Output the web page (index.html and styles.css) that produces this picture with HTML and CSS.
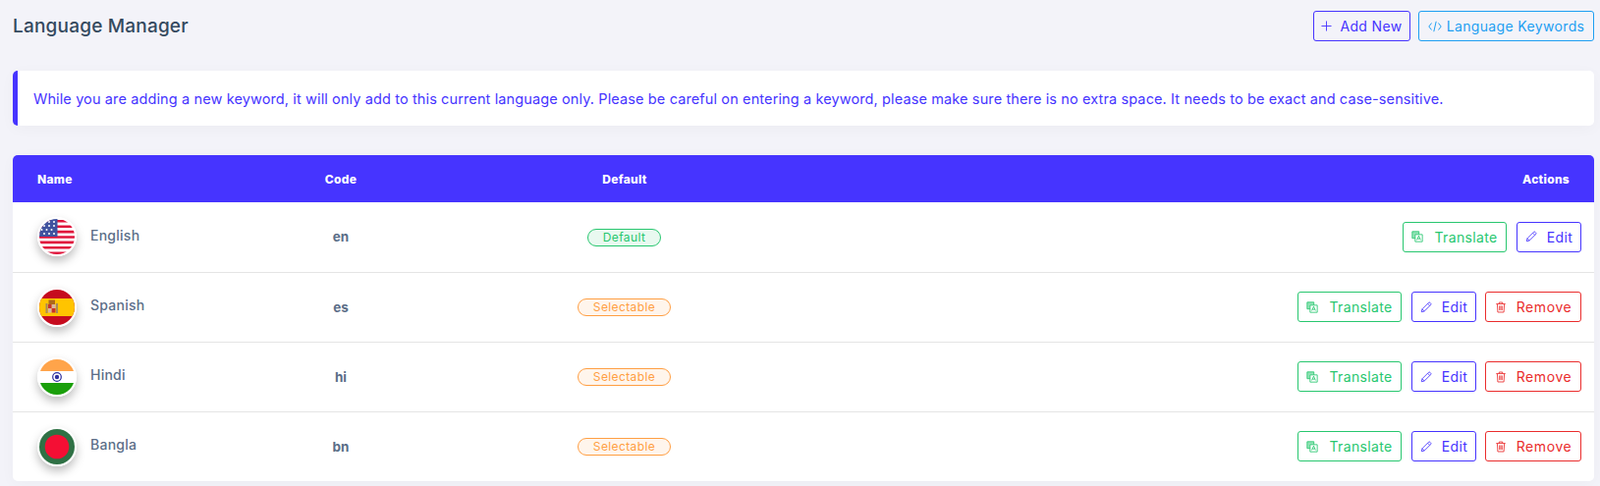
FILE: index.html
```html
<!DOCTYPE html>
<html lang="en">
<head>
    <meta charset="UTF-8">
    <title>Language Manager</title>
    <link rel="stylesheet" href="styles.css">
</head>
<body>

    <div class="top-bar">
        <h2 class="page-title">Language Manager</h2>
        <div class="top-actions">
            <a class="btn btn-purple btn-add" href="#">
                <svg class="icon-plus" viewBox="0 0 12 12"><path d="M6 .5v11M.5 6h11"/></svg>
                Add New
            </a>
            <a class="btn btn-blue btn-keywords" href="#">
                <svg class="icon-code" viewBox="0 0 14 12"><path d="M3.500 2.500 .8 6l2.700 3.500M10.500 2.500 13.200 6l-2.700 3.500M8.200 .8 5.800 11.200"/></svg>
                Language Keywords
            </a>
        </div>
    </div>

    <div class="notice">
        While you are adding a new keyword, it will only add to this current language only. Please be careful on entering a keyword, please make sure there is no extra space. It needs to be exact and case-sensitive.
    </div>

    <div class="table-card">
        <table class="lang-table">
            <colgroup>
                <col class="col-name">
                <col class="col-code">
                <col class="col-default">
                <col>
            </colgroup>
            <thead>
                <tr>
                    <th class="left">Name</th>
                    <th>Code</th>
                    <th>Default</th>
                    <th class="right">Actions</th>
                </tr>
            </thead>
            <tbody>
                <tr>
                    <td>
                        <div class="lang">
                            <span class="flag">
                                <svg viewBox="0 0 36 36">
                                    <rect width="36" height="36" fill="#fff"/>
                                    <path d="M0 1h36v2.600H0zM0 6.400h36v2.600H0zM0 11.800h36v2.600H0zM0 17.200h36v2.600H0zM0 22.600h36v2.600H0zM0 28h36v2.600H0zM0 33.400h36V36H0z" fill="#e0153c"/>
                                    <rect width="18.500" height="18" fill="#41539f"/>
                                    <g fill="#fff">
                                        <circle cx="10" cy="3" r="1"/><circle cx="15" cy="3" r="1"/>
                                        <circle cx="5" cy="7" r="1"/><circle cx="10" cy="7" r="1"/><circle cx="15" cy="7" r="1"/>
                                        <circle cx="2.500" cy="11" r="1"/><circle cx="7.500" cy="11" r="1"/><circle cx="12.500" cy="11" r="1"/>
                                        <circle cx="5" cy="15" r="1"/><circle cx="10" cy="15" r="1"/><circle cx="15" cy="15" r="1"/>
                                    </g>
                                </svg>
                            </span>
                            <span class="lang-name">English</span>
                        </div>
                    </td>
                    <td class="code">en</td>
                    <td class="center"><span class="badge badge-green">Default</span></td>
                    <td>
                        <div class="row-actions">
                            <a class="btn btn-green btn-translate" href="#">
                                <svg class="icon" viewBox="0 0 14 14"><path class="fill" d="M1 1h8v3.500H4.500V9H1z"/><path d="M4.500 4.500h8.500V13H4.500zM1 1h8v3.500M1 1v8h3.500"/><path d="M6.500 11l2.200-5 2.200 5M7.400 9.500h2.600"/></svg>
                                Translate
                            </a>
                            <a class="btn btn-purple btn-edit" href="#">
                                <svg class="icon" viewBox="0 0 14 14"><path d="M1.500 12.500l.8-3.400L9.800 1.600a1.300 1.300 0 0 1 1.900 0l.7.7a1.300 1.300 0 0 1 0 1.900L4.900 11.700zM2.300 9.100l2.600 2.600M8.800 2.600l2.600 2.600"/></svg>
                                Edit
                            </a>
                        </div>
                    </td>
                </tr>
                <tr>
                    <td>
                        <div class="lang">
                            <span class="flag">
                                <svg viewBox="0 0 36 36">
                                    <rect width="36" height="36" fill="#c60b1e"/>
                                    <rect y="9" width="36" height="18" fill="#ffc400"/>
                                    <rect x="6.500" y="14" width="2" height="10" fill="#a88a5a"/>
                                    <rect x="17" y="14" width="2" height="10" fill="#a88a5a"/>
                                    <rect x="9.500" y="10.500" width="6.500" height="4.500" fill="#ad6a1a"/>
                                    <rect x="9" y="15" width="3.700" height="4" fill="#c8322a"/>
                                    <rect x="12.700" y="15" width="3.800" height="4" fill="#d9b4a0"/>
                                    <rect x="9" y="19" width="3.700" height="4.500" fill="#d9b4a0"/>
                                    <rect x="12.700" y="19" width="3.800" height="4.500" fill="#c8322a"/>
                                </svg>
                            </span>
                            <span class="lang-name">Spanish</span>
                        </div>
                    </td>
                    <td class="code">es</td>
                    <td class="center"><span class="badge badge-orange">Selectable</span></td>
                    <td>
                        <div class="row-actions">
                            <a class="btn btn-green btn-translate" href="#">
                                <svg class="icon" viewBox="0 0 14 14"><path class="fill" d="M1 1h8v3.500H4.500V9H1z"/><path d="M4.500 4.500h8.500V13H4.500zM1 1h8v3.500M1 1v8h3.500"/><path d="M6.500 11l2.200-5 2.200 5M7.400 9.500h2.600"/></svg>
                                Translate
                            </a>
                            <a class="btn btn-purple btn-edit" href="#">
                                <svg class="icon" viewBox="0 0 14 14"><path d="M1.500 12.500l.8-3.400L9.800 1.600a1.300 1.300 0 0 1 1.900 0l.7.7a1.300 1.300 0 0 1 0 1.900L4.900 11.700zM2.300 9.100l2.600 2.600M8.800 2.600l2.600 2.600"/></svg>
                                Edit
                            </a>
                            <a class="btn btn-red btn-remove" href="#">
                                <svg class="icon" viewBox="0 0 14 14"><path d="M1.500 3h11M5 3V1.200h4V3M2.800 3l.6 9.800h7.200l.6-9.800M5.500 5.200v5.400M7 5.200v5.400M8.500 5.200v5.400"/></svg>
                                Remove
                            </a>
                        </div>
                    </td>
                </tr>
                <tr>
                    <td>
                        <div class="lang">
                            <span class="flag">
                                <svg viewBox="0 0 36 36">
                                    <rect width="36" height="36" fill="#fff"/>
                                    <rect width="36" height="12" fill="#ffa44a"/>
                                    <rect y="24" width="36" height="12" fill="#1a9f0b"/>
                                    <circle cx="18" cy="18" r="4.300" fill="none" stroke="#2e2f9e" stroke-width="1.200"/>
                                    <circle cx="18" cy="18" r="2.200" fill="#2e2f9e"/>
                                </svg>
                            </span>
                            <span class="lang-name">Hindi</span>
                        </div>
                    </td>
                    <td class="code">hi</td>
                    <td class="center"><span class="badge badge-orange">Selectable</span></td>
                    <td>
                        <div class="row-actions">
                            <a class="btn btn-green btn-translate" href="#">
                                <svg class="icon" viewBox="0 0 14 14"><path class="fill" d="M1 1h8v3.500H4.500V9H1z"/><path d="M4.500 4.500h8.500V13H4.500zM1 1h8v3.500M1 1v8h3.500"/><path d="M6.500 11l2.200-5 2.200 5M7.400 9.500h2.600"/></svg>
                                Translate
                            </a>
                            <a class="btn btn-purple btn-edit" href="#">
                                <svg class="icon" viewBox="0 0 14 14"><path d="M1.500 12.500l.8-3.400L9.800 1.600a1.300 1.300 0 0 1 1.900 0l.7.7a1.300 1.300 0 0 1 0 1.900L4.900 11.700zM2.300 9.100l2.600 2.600M8.800 2.600l2.600 2.600"/></svg>
                                Edit
                            </a>
                            <a class="btn btn-red btn-remove" href="#">
                                <svg class="icon" viewBox="0 0 14 14"><path d="M1.500 3h11M5 3V1.200h4V3M2.800 3l.6 9.800h7.200l.6-9.800M5.500 5.200v5.400M7 5.200v5.400M8.500 5.200v5.400"/></svg>
                                Remove
                            </a>
                        </div>
                    </td>
                </tr>
                <tr>
                    <td>
                        <div class="lang">
                            <span class="flag">
                                <svg viewBox="0 0 36 36">
                                    <rect width="36" height="36" fill="#2f7145"/>
                                    <circle cx="18" cy="18" r="12.300" fill="#f40f34"/>
                                </svg>
                            </span>
                            <span class="lang-name">Bangla</span>
                        </div>
                    </td>
                    <td class="code">bn</td>
                    <td class="center"><span class="badge badge-orange">Selectable</span></td>
                    <td>
                        <div class="row-actions">
                            <a class="btn btn-green btn-translate" href="#">
                                <svg class="icon" viewBox="0 0 14 14"><path class="fill" d="M1 1h8v3.500H4.500V9H1z"/><path d="M4.500 4.500h8.500V13H4.500zM1 1h8v3.500M1 1v8h3.500"/><path d="M6.500 11l2.200-5 2.200 5M7.400 9.500h2.600"/></svg>
                                Translate
                            </a>
                            <a class="btn btn-purple btn-edit" href="#">
                                <svg class="icon" viewBox="0 0 14 14"><path d="M1.500 12.500l.8-3.400L9.800 1.600a1.300 1.300 0 0 1 1.900 0l.7.7a1.300 1.300 0 0 1 0 1.900L4.900 11.700zM2.300 9.100l2.600 2.600M8.800 2.600l2.600 2.600"/></svg>
                                Edit
                            </a>
                            <a class="btn btn-red btn-remove" href="#">
                                <svg class="icon" viewBox="0 0 14 14"><path d="M1.500 3h11M5 3V1.200h4V3M2.800 3l.6 9.800h7.200l.6-9.800M5.500 5.200v5.400M7 5.200v5.400M8.500 5.200v5.400"/></svg>
                                Remove
                            </a>
                        </div>
                    </td>
                </tr>
            </tbody>
        </table>
    </div>

</body>
</html>
```

FILE: styles.css
```css
* {
    box-sizing: border-box;
}

body {
    margin: 0;
    padding: 11px 6px 0 13px;
    height: 495px;
    overflow: hidden;
    background-color: #f3f3f9;
    font-family: Inter, "Open Sans", sans-serif;
    font-size: 14px;
    color: #5b6e88;
}

.top-bar {
    display: flex;
    justify-content: space-between;
    align-items: center;
    height: 31px;
}

.page-title {
    margin: 0;
    font-size: 19px;
    font-weight: 500;
    letter-spacing: .2px;
    color: #34495e;
}

.top-actions {
    display: flex;
    gap: 8px;
}

.btn {
    display: inline-flex;
    align-items: center;
    justify-content: center;
    height: 31px;
    border: 1px solid;
    border-radius: 3px;
    font-size: 14px;
    letter-spacing: .35px;
    text-decoration: none;
    white-space: nowrap;
}

.btn svg {
    flex: none;
    fill: none;
    stroke: currentColor;
    stroke-width: 1;
}

.btn .fill {
    fill: currentColor;
    fill-opacity: .5;
    stroke: none;
}

.btn-purple {
    color: #4634ff;
    border-color: #4634ff;
}

.btn-blue {
    color: #1e9ff2;
    border-color: #1e9ff2;
}

.btn-green {
    color: #28c76f;
    border-color: #28c76f;
}

.btn-red {
    color: #ea2d2d;
    border-color: #ea2d2d;
}

.btn-add {
    width: 99px;
    gap: 8px;
}

.btn-keywords {
    width: 179px;
    gap: 5px;
}

.btn-translate {
    width: 106px;
    margin-right: 1px;
    gap: 11px;
}

.btn-edit {
    width: 66px;
    gap: 10px;
}

.btn-remove {
    width: 98px;
    gap: 10px;
    letter-spacing: .6px;
}

.icon-plus {
    width: 11px;
    height: 11px;
}

.icon-code {
    width: 14px;
    height: 12px;
}

.icon {
    width: 12px;
    height: 12px;
}

.notice {
    display: flex;
    align-items: center;
    height: 56px;
    margin-top: 30px;
    padding-left: 16px;
    background-color: #fff;
    border-left: 5px solid #4634ff;
    border-radius: 5px;
    box-shadow: 0 3px 15px rgba(0, 0, 0, 0.03);
    color: #4634ff;
    font-size: 14.5px;
    letter-spacing: .12px;
}

.table-card {
    margin-top: 30px;
    background-color: #fff;
    border-radius: 5px;
    overflow: hidden;
    box-shadow: 0 3px 15px rgba(0, 0, 0, 0.03);
}

.lang-table {
    width: 100%;
    border-collapse: collapse;
    table-layout: fixed;
}

.col-name {
    width: 254px;
}

.col-code {
    width: 160px;
}

.col-default {
    width: 418px;
}

.lang-table th {
    height: 48px;
    padding: 0 25px;
    background-color: #4634ff;
    color: #fff;
    font-size: 12px;
    font-weight: 800;
    letter-spacing: .3px;
    text-align: center;
}

.lang-table th.left {
    text-align: left;
}

.lang-table th.right {
    text-align: right;
}

.lang-table td {
    height: 71px;
    padding: 0 13px 0 25px;
    border-bottom: 1px solid #e5e5e5;
}

.lang-table tr:last-child td {
    border-bottom: 0;
}

.lang-table td.code {
    padding: 0;
    text-align: center;
    font-size: 13.5px;
    font-weight: 700;
}

.lang-table td.center {
    padding: 0;
    text-align: center;
}

.lang {
    display: flex;
    align-items: center;
    gap: 14px;
}

.flag {
    width: 40px;
    height: 40px;
    border: 2px solid #fff;
    border-radius: 50%;
    overflow: hidden;
    box-shadow: 0 5px 10px rgba(0, 0, 0, 0.25);
}

.flag svg {
    display: block;
    width: 100%;
    height: 100%;
}

.lang-name {
    font-size: 14px;
    font-weight: 500;
    letter-spacing: .25px;
    position: relative;
    top: -2px;
}

.badge {
    display: inline-block;
    height: 18px;
    margin-right: 1px;
    line-height: 16px;
    border: 1px solid;
    border-radius: 9px;
    font-size: 12px;
    letter-spacing: .4px;
}

.badge-green {
    width: 75px;
    color: #28c76f;
    background-color: rgba(40, 199, 111, 0.1);
}

.badge-orange {
    width: 95px;
    color: #ff9f43;
    background-color: rgba(255, 159, 67, 0.1);
}

.row-actions {
    display: flex;
    justify-content: flex-end;
    gap: 9px;
}
```
